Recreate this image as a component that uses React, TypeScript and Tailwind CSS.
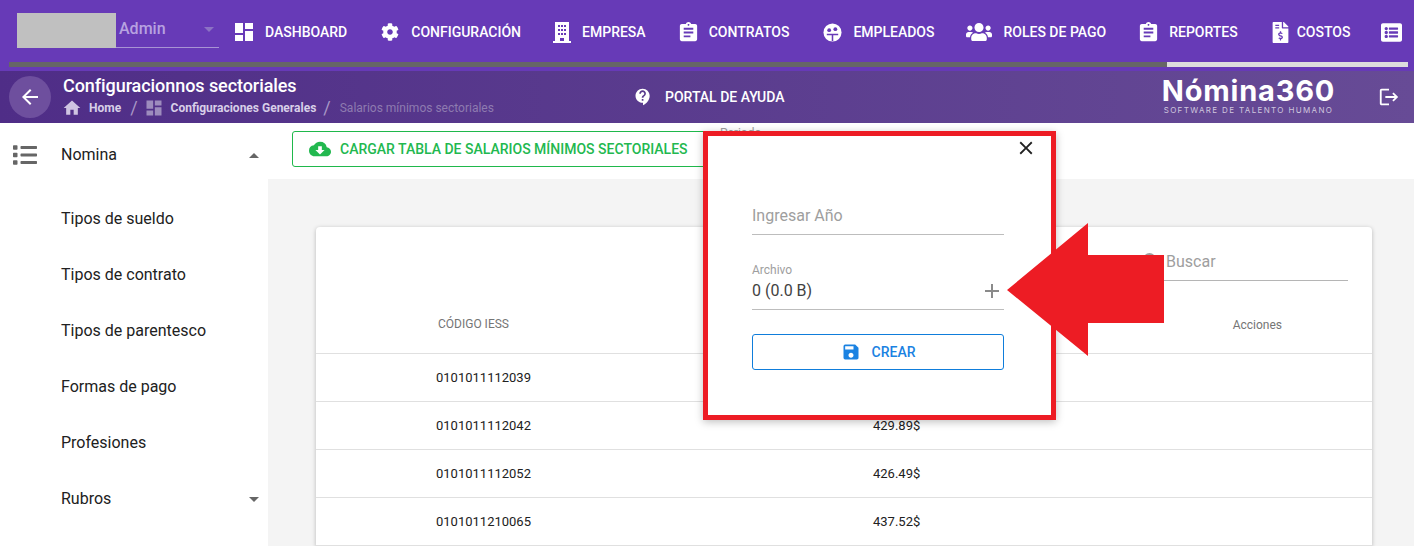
import React from 'react';
import { FaCog, FaFileInvoiceDollar, FaListAlt, FaUsers, FaList } from 'react-icons/fa';
import {
  MdAdd,
  MdArrowBack,
  MdAssignment,
  MdClose,
  MdCloudDownload,
  MdContactSupport,
  MdDashboard,
  MdHome,
  MdLogout,
  MdSave,
  MdSearch,
} from 'react-icons/md';

const FaceIcon: React.FC = () => (
  <svg width="19" height="19" viewBox="0 0 20 20">
    <circle cx="10" cy="10" r="9.5" fill="#fff" />
    <circle cx="6.5" cy="7.5" r="2" fill="#673ab7" />
    <circle cx="13" cy="6.5" r="2" fill="#673ab7" />
    <path d="M4 12h12M10 12v7" stroke="#673ab7" strokeWidth="1.6" fill="none" />
  </svg>
);

const BuildingIcon: React.FC = () => (
  <svg width="18" height="21" viewBox="0 0 18 21">
    <path d="M2 0h14v19h2v2H0v-2h2z" fill="#fff" />
    <path
      d="M5 3h2v2H5zM8 3h2v2H8zM11 3h2v2h-2zM5 7h2v2H5zM8 7h2v2H8zM11 7h2v2h-2zM5 11h2v2H5zM8 11h2v2H8zM11 11h2v2h-2zM7 16h4v3H7z"
      fill="#673ab7"
    />
  </svg>
);

const navItems = [
  { label: 'DASHBOARD', icon: <MdDashboard size={24} className="-ml-[3px]" />, box: 'w-[30px]', gap: 'ml-0' },
  { label: 'CONFIGURACIÓN', icon: <FaCog size={18} />, box: 'w-[30px]', gap: 'ml-[34px]' },
  { label: 'EMPRESA', icon: <BuildingIcon />, box: 'w-[29px]', gap: 'ml-[32px]' },
  { label: 'CONTRATOS', icon: <MdAssignment size={23} className="-ml-[3px]" />, box: 'w-[29px]', gap: 'ml-[34px]' },
  { label: 'EMPLEADOS', icon: <FaceIcon />, box: 'w-[30px]', gap: 'ml-[34px]' },
  { label: 'ROLES DE PAGO', icon: <FaUsers size={26} />, box: 'w-[37px]', gap: 'ml-[32px]' },
  { label: 'REPORTES', icon: <MdAssignment size={23} className="-ml-[3px]" />, box: 'w-[29px]', gap: 'ml-[34px]' },
  { label: 'COSTOS', icon: <FaFileInvoiceDollar size={21} />, box: 'w-[27px]', gap: 'ml-[32px]' },
];

const sideItems = ['Tipos de sueldo', 'Tipos de contrato', 'Tipos de parentesco', 'Formas de pago', 'Profesiones'];

const rows = [
  { code: '0101011112039', value: '' },
  { code: '0101011112042', value: '429.89$' },
  { code: '0101011112052', value: '426.49$' },
  { code: '0101011210065', value: '437.52$' },
];

export default function App() {
  return (
    <div className="relative h-[546px] w-full overflow-hidden bg-white font-['Roboto',sans-serif]">
      {/* top bar */}
      <header className="h-[71px] bg-[#673ab7] pt-[13px]">
        <div className="flex h-[35px]">
          <div className="ml-[17px] h-[35px] w-[99px] bg-[#c0c0c0]" />
          <div className="flex h-[35px] w-[103px] items-start justify-between border-b border-[#a893d4] pl-[3px] pr-[5px]">
            <span className="text-[16px] font-medium leading-[31px] text-[#b7a2e0]">Admin</span>
            <span className="mt-[14px] h-0 w-0 border-x-[5px] border-t-[5px] border-x-transparent border-t-[#8c72c4]" />
          </div>
          <nav className="ml-[16px] flex h-[35px] items-center pt-[3px] text-[14px] font-medium text-white">
            {navItems.map((item) => (
              <div key={item.label} className={`flex items-center ${item.gap}`}>
                <span className={`flex items-center ${item.box}`}>{item.icon}</span>
                <span className="whitespace-nowrap">{item.label}</span>
              </div>
            ))}
            <span className="ml-[31px] text-white">
              <FaListAlt size={21} />
            </span>
          </nav>
        </div>
        <div className="ml-[9px] mt-[14px] flex h-[5px] w-[1399px]">
          <div className="w-[1158px] bg-[#666666]" />
          <div className="flex-1 bg-[#dddddd]" />
        </div>
      </header>

      {/* sub bar */}
      <div className="flex h-[52px] items-center bg-gradient-to-r from-[#4f2d87] to-[#674b96] pl-[9px] text-white">
        <div className="flex h-[42px] w-[42px] items-center justify-center rounded-full bg-[#6e4f9e]">
          <MdArrowBack size={24} />
        </div>
        <div className="mb-[2px] ml-[12px] w-[571px]">
          <div className="text-[18px] font-medium leading-[24px] tracking-[-0.07px]">Configuracionnos sectoriales</div>
          <div className="flex items-center text-[12px] font-bold leading-[18px] text-[#d8cfe8]">
            <MdHome size={20} className="-ml-[1px] text-[#cfc4e2]" />
            <span className="ml-[7px]">Home</span>
            <span className="ml-[9px] text-[18px] font-normal text-[#a897c6]">/</span>
            <MdDashboard size={20} className="ml-[6px] text-[#9d8cbd]" />
            <span className="ml-[7px]">Configuraciones Generales</span>
            <span className="ml-[7px] text-[18px] font-normal text-[#a897c6]">/</span>
            <span className="ml-[9px] font-normal text-[#8e7bb0]">Salarios mínimos sectoriales</span>
          </div>
        </div>
        <MdContactSupport size={20} className="-ml-[1px]" />
        <span className="ml-[12px] text-[14px] font-medium">PORTAL DE AYUDA</span>
        <div className="mb-[3px] ml-[375px] w-[178px] text-center font-['Inter',sans-serif]">
          <div className="whitespace-nowrap text-[29px] font-bold leading-[29px] tracking-[0.8px]">Nómina360</div>
          <div className="whitespace-nowrap text-[8px] leading-[10px] tracking-[1.35px] text-[#cfc6de]">
            SOFTWARE DE TALENTO HUMANO
          </div>
        </div>
        <MdLogout size={22} className="ml-[40px]" />
      </div>

      <div className="flex h-[423px]">
        {/* sidebar */}
        <aside className="w-[268px] shrink-0 bg-white text-[16px] text-[#212121]">
          <div className="flex h-[68px] items-center pb-[5px] pl-[13px] pr-[9px] pt-[1px]">
            <FaList size={24} className="text-[#666666]" />
            <span className="ml-[24px] flex-1">Nomina</span>
            <span className="h-0 w-0 border-x-[5px] border-b-[5px] border-x-transparent border-b-[#666666]" />
          </div>
          {sideItems.map((item) => (
            <div key={item} className="flex h-14 items-center pl-[61px]">
              {item}
            </div>
          ))}
          <div className="flex h-14 items-center justify-between pl-[61px] pr-[9px]">
            Rubros
            <span className="h-0 w-0 border-x-[5px] border-t-[5px] border-x-transparent border-t-[#666666]" />
          </div>
        </aside>

        {/* main */}
        <main className="flex-1 overflow-hidden bg-[#f4f4f4]">
          <div className="flex h-[56px] items-start bg-white pl-[24px] pt-[8px]">
            <button className="flex h-[36px] w-[440px] shrink-0 items-center rounded-[3px] border border-[#1fb84b] pl-[16px] text-[14px] font-medium text-[#22b84f]">
              <MdCloudDownload size={22} />
              <span className="ml-[9px] whitespace-nowrap">CARGAR TABLA DE SALARIOS MÍNIMOS SECTORIALES</span>
            </button>
          </div>
          <section className="ml-[48px] mt-[48px] w-[1056px] rounded-t-[4px] bg-white shadow-[0_1px_4px_rgba(0,0,0,0.25)]">
            <div className="flex h-[53px] justify-end pr-[24px] pt-[20px]">
              <div className="flex h-[34px] w-[208px] items-center border-b border-[#b5b5b5] pb-[4px] text-[16px] text-[#9e9e9e]">
                <MdSearch size={24} className="text-[#9e9e9e]" />
                <span className="ml-[2px]">Buscar</span>
              </div>
            </div>
            <div className="flex h-[74px] items-center justify-between border-b border-[#e0e0e0] pt-[14px] text-[12px] text-[#757575]">
              <span className="pl-[122px]">CÓDIGO IESS</span>
              <span className="pr-[90px] pt-[2px]">Acciones</span>
            </div>
            {rows.map((row) => (
              <div key={row.code} className="flex h-12 items-center border-b border-[#e0e0e0] text-[13px] text-[#212121]">
                <span className="w-[557px] pl-[120px]">{row.code}</span>
                <span>{row.value}</span>
              </div>
            ))}
          </section>
        </main>
      </div>

      {/* label left behind the popup */}
      <span className="absolute left-[720px] top-[124px] text-[12px] text-[#9e9e9e]">Periodo</span>

      {/* popup */}
      <div className="absolute left-[703px] top-[131px] h-[289px] w-[353px] border-[5px] border-[#ed1c24] bg-white pl-[44px] pr-[47px] shadow-[0_2px_8px_rgba(0,0,0,0.25)]">
        <button className="absolute right-[14px] top-[1px] text-[#212121]">
          <MdClose size={22} />
        </button>
        <div className="mt-[64px] flex h-[35px] items-center border-b border-[#bdbdbd] pb-[2px] text-[16px] text-[#9e9e9e]">
          Ingresar Año
        </div>
        <div className="mt-[28px] h-[47px] border-b border-[#bdbdbd]">
          <div className="text-[12px] leading-[15px] text-[#9e9e9e]">Archivo</div>
          <div className="flex items-center justify-between text-[16px] leading-[26px] text-[#424242]">
            0 (0.0 B)
            <MdAdd size={24} className="text-[#8a8a8a]" />
          </div>
        </div>
        <button className="mt-[24px] flex h-[36px] w-full items-center justify-center rounded-[3px] border border-[#0f7ddb] text-[14px] font-medium text-[#1a82e2]">
          <MdSave size={20} />
          <span className="ml-[11px]">CREAR</span>
        </button>
      </div>

      {/* red arrow annotation */}
      <svg className="absolute left-[1000px] top-[220px]" width="170" height="140" viewBox="0 0 170 140">
        <polygon points="7,70 88,3 88,35 164,35 164,103 88,103 88,136" fill="#ed1c24" />
      </svg>
    </div>
  );
}
